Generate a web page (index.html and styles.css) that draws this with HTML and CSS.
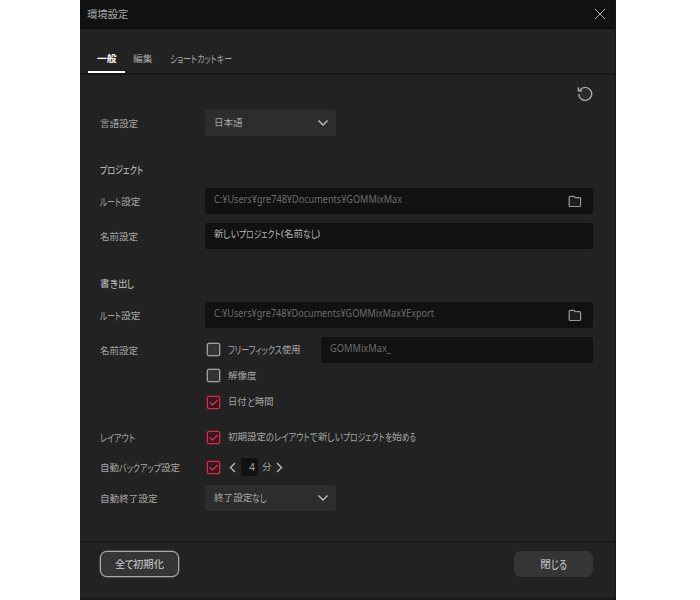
FILE: index.html
```html
<!DOCTYPE html>
<html lang="ja">
<head>
<meta charset="utf-8">
<title>環境設定</title>
<link rel="stylesheet" href="styles.css">
</head>
<body>
<svg width="0" height="0" class="defs">
  <symbol id="check" viewBox="1 1 11 11"><path d="M2.800 6.300 5.500 9 10.600 3.900"/></symbol>
  <symbol id="down" viewBox="0 0 12 8"><path d="M1.500 1.500 6 6 10.500 1.500"/></symbol>
  <symbol id="folder" viewBox="0 0 14 13"><path d="M1.200 2.500Q1.200 1.400 2.300 1.400H6L7.200 2.600H11.500Q12.600 2.600 12.600 3.700V10.400Q12.600 11.500 11.500 11.500H2.300Q1.200 11.500 1.200 10.400Z"/></symbol>
</svg>
<div class="dialog">
  <header class="titlebar">
    <span class="title" data-w="41.5">環境設定</span>
    <svg class="close" viewBox="0 0 12 12"><path d="M1 1 11 11M11 1 1 11"/></svg>
  </header>
  <nav class="tabs">
    <div class="tab active"><span data-w="19.5">一般</span></div>
    <div class="tab edit"><span data-w="19.5">編集</span></div>
    <div class="tab shortcut"><span data-w="62">ショートカットキー</span></div>
  </nav>
  <main class="content">
    <div class="tools"><svg class="reset" viewBox="0 0 16 16"><path d="M1.700 8A6.500 6.500 0 1 0 3.200 3.700M1.400 1.300V4.700H5"/></svg></div>
    <div class="row language"><div class="label"><span data-w="38">言語設定</span></div><div class="select"><span data-w="28.5">日本語</span><svg><use href="#down"/></svg></div></div>
    <h2 class="project-heading"><span data-w="43">プロジェクト</span></h2>
    <div class="row project-path"><div class="label"><span data-w="21">ルート</span><span data-w="19.5">設定</span></div><div class="input dim"><span data-w="188">C:¥Users¥gre748¥Documents¥GOMMixMax</span><svg><use href="#folder"/></svg></div></div>
    <div class="row project-name"><div class="label"><span data-w="38">名前設定</span></div><div class="input"><span data-w="9.5">新</span><span data-w="16">しい</span><span data-w="41.5">プロジェクト</span><span data-w="3">(</span><span data-w="19">名前</span><span data-w="14.5">なし</span><span data-w="3">)</span></div></div>
    <h2 class="export-heading"><span data-w="9.5">書</span><span data-w="8">き</span><span data-w="9.5">出</span><span data-w="7">し</span></h2>
    <div class="row export-path"><div class="label"><span data-w="21">ルート</span><span data-w="19.5">設定</span></div><div class="input dim"><span data-w="220">C:¥Users¥gre748¥Documents¥GOMMixMax¥Export</span><svg><use href="#folder"/></svg></div></div>
    <div class="row export-name"><div class="label"><span data-w="38">名前設定</span></div><div class="option prefix"><i class="box"></i><span data-w="54">フリーフィックス</span><span data-w="18.500">使用</span></div><div class="input dim"><span data-w="61">GOMMixMax_</span></div></div>
    <div class="row resolution"><div class="label"></div><div class="option"><i class="box"></i><span data-w="28.5">解像度</span></div></div>
    <div class="row date"><div class="label"></div><div class="option"><svg class="box on"><use href="#check"/></svg><span data-w="18.5">日付</span><span data-w="8">と</span><span data-w="18.500">時間</span></div></div>
    <div class="row layout"><div class="label"><span data-w="35">レイアウト</span></div><div class="option"><svg class="box on"><use href="#check"/></svg><span data-w="38">初期設定</span><span data-w="51.5">のレイアウトで</span><span data-w="9.5">新</span><span data-w="16">しい</span><span data-w="41.5">プロジェクト</span><span data-w="7.500">を</span><span data-w="10">始</span><span data-w="14">める</span></div></div>
    <div class="row backup"><div class="label"><span data-w="19">自動</span><span data-w="42">バックアップ</span><span data-w="19">設定</span></div><div class="option"><svg class="box on"><use href="#check"/></svg><svg class="step" viewBox="0 0 7 11"><path d="M6 1 1.500 5.500 6 10"/></svg><b class="minutes">4</b><span data-w="9.5">分</span><svg class="step next" viewBox="0 0 7 11"><path d="M1 1 5.500 5.500 1 10"/></svg></div></div>
    <div class="row shutdown"><div class="label"><span data-w="57.5">自動終了設定</span></div><div class="select"><span data-w="38.5">終了設定</span><span data-w="14.500">なし</span><svg><use href="#down"/></svg></div></div>
  </main>
  <footer class="footer">
    <button class="outlined"><span data-w="10">全</span><span data-w="8.5">て</span><span data-w="31">初期化</span></button>
    <button><span data-w="10.5">閉</span><span data-w="16">じる</span></button>
  </footer>
</div>
<script src="fit.js"></script>
</body>
</html>
```
FILE: fit.js
```js
// Kana runs are set slightly taller than the ideographs beside them.
document.querySelectorAll('[data-w]').forEach(function (el) {
  if (/^[\u3040-\u30ff]+$/.test(el.textContent)) el.classList.add('kana');
  var natural = el.getBoundingClientRect().width;
  var wanted = parseFloat(el.dataset.w);
  el.style.transform = 'scaleX(' + wanted / natural + ')';
  el.style.marginRight = wanted - natural + 'px';
});
```
FILE: styles.css
```css
* { box-sizing: border-box; }
body { margin: 0; background: #fff; }
.defs { display: block; height: 0; }
.dialog {
  width: 536px; height: 600px; margin-left: 80px;
  display: flex; flex-direction: column;
  background: #222; color: #a6a6a6;
  border-right: 1px solid #181818; border-bottom: 2px solid #181818;
  font: 9.5px/14px "Noto Sans", "Noto Sans CJK JP", sans-serif;
}
[data-w] { display: inline-block; flex: none; white-space: pre; transform-origin: 0 50%; font-feature-settings: "palt"; }
.kana { font-size: 1.12em; }
svg { display: block; flex: none; fill: none; stroke: #aaa; stroke-width: 1.2; }
.titlebar { height: 29px; padding: 0 9px 0 6.5px; display: flex; align-items: center; justify-content: space-between; background: #111; border-bottom: 2px solid #0b0b0b; }
.title { font-size: 10.5px; padding-top: 1px; }
.close { width: 12px; height: 12px; stroke-width: 1; }
.tabs { height: 46px; padding: 15px 0 0 8px; display: flex; border-bottom: 2px solid #171717; }
.tab { height: 29px; padding: 8px 8px 0 9px; margin-right: 8px; }
.tab.active { width: 37px; color: #fff; font-weight: 700; border-bottom: 2px solid #fff; }
.tab.edit { width: 29px; padding-right: 0; padding-left: 0; }
.tab.shortcut { padding-left: 0; }
.content { height: 466px; padding: 11px 22px 0 20px; }
.tools { height: 16px; display: flex; justify-content: flex-end; }
.reset { width: 16px; height: 16px; fill: #2c2c2c; stroke-width: 1.4; }
.row { height: 26px; display: flex; align-items: center; }
.label { width: 105px; flex: none; display: flex; padding-top: 1px; }
.select { width: 131px; height: 26px; padding: 0 7px 0 8.5px; display: flex; align-items: center; background: #2d2d2d; border-radius: 3px; }
.select svg { width: 12px; height: 8px; margin-left: auto; stroke: #c0c0c0; stroke-width: 1.4; }
.input { flex: 1; height: 26px; padding: 0 11px 0 8.5px; display: flex; align-items: center; background: #111; border-radius: 3px; color: #b4b4b4; }
.input span { position: relative; top: -2px; }
.input.dim { color: #6c6c6c; }
.input.dim span { font-size: 10px; }
.input svg { width: 14px; height: 13px; margin-left: auto; fill: #1d1d1d; stroke: #999; }
.option { display: flex; align-items: center; padding-left: 2px; }
.box { width: 13px; height: 13px; flex: none; margin-right: 8px; border: 1px solid #a0a0a0; border-radius: 2px; background: #333; box-shadow: 0 0 0 0.5px #777; }
.box.on { border-color: #d52d4e; background: #36171f; stroke: #d52d4e; stroke-width: 1.4; box-shadow: 0 0 0 0.5px #8a2339; }
.prefix { width: 116px; flex: none; }
h2 { height: 14px; margin: 27px 0 11px; display: flex; font: inherit; font-weight: 500; color: #b0b0b0; }
.language { margin-top: 8px; }
.project-name { margin-top: 9px; }
.export-heading { margin: 28px 0 11px; }
.export-name { margin-top: 9px; }
.export-name .prefix { padding-bottom: 1px; }
.resolution .option { padding-bottom: 1px; }
.layout { margin-top: 9px; }
.backup { margin-top: 4px; }
.shutdown { margin-top: 5px; }
.step { width: 7px; height: 11px; margin: 0 5px 0 1px; stroke-width: 1.5; stroke: #b0b0b0; }
.step.next { margin: 0 0 0 4px; }
.minutes { width: 17px; height: 18px; margin-right: 4px; padding: 2px 3px 0 0; background: #111; border-radius: 2px; font-weight: 400; font-size: 10px; text-align: right; }
.footer { height: 57px; padding: 8px 22px 0 20px; display: flex; justify-content: space-between; align-items: flex-start; border-top: 2px solid #181818; }
.footer button { width: 79px; height: 26px; padding: 0; display: flex; align-items: center; justify-content: center; border: 0; border-radius: 7px; background: #353535; color: #b8b8b8; font: inherit; font-size: 10.500px; font-weight: 500; }
.footer .outlined { border: 1px solid #a8a8a8; box-shadow: 0 0 0 0.5px #777; }
```
